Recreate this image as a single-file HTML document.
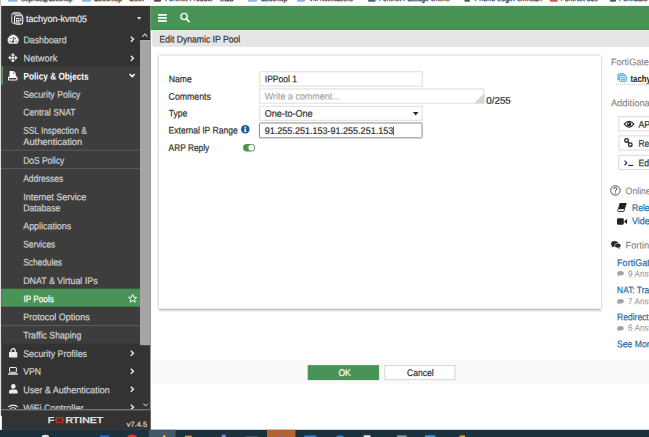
<!DOCTYPE html><html lang="en"><head><meta charset="utf-8"><title>Edit Dynamic IP Pool</title><style>
html,body{margin:0;padding:0}
body{width:649px;height:437px;overflow:hidden;position:relative;background:#fff;font-family:"Liberation Sans",sans-serif;font-size:9.33px;color:#333}
.a{position:absolute}
.t{position:absolute;left:0;top:0;white-space:pre;line-height:0;transform-origin:0 0;display:block;-webkit-text-stroke:.22px}
svg{position:absolute;overflow:visible}
#wrap{left:0;top:0;width:649px;height:437px;overflow:hidden}
#bg{left:0;top:0}
#bm{left:0;top:0;width:649px;height:5.9px;overflow:hidden}
h1{margin:0;font:inherit}
#card{left:0;top:0;width:442px;height:253.4px;background:#fff;box-shadow:0 .5px 2.6px .3px rgba(0,0,0,.36);transform:translate(159px,55.75px)}
</style></head><body>
<div id="wrap" class="a">
<svg id="bg" width="649" height="437" viewBox="0 0 649 437"><rect x="8" y="-4" width="9.60" height="5.70" fill="#7aa7e6" rx="1" opacity=".85"/><rect x="82" y="-4" width="9.00" height="5.70" fill="#7aa7e6" rx="1" opacity=".85"/><rect x="154" y="-4" width="7.00" height="5.70" fill="#333" rx="1" opacity=".85"/><rect x="248" y="-4" width="9.00" height="5.70" fill="#7aa7e6" rx="1" opacity=".85"/><rect x="297" y="-4" width="8.00" height="5.70" fill="#7a9fe0" rx="1" opacity=".85"/><rect x="368" y="-4" width="7.60" height="5.70" fill="#1d5560" rx="1" opacity=".85"/><rect x="464.4" y="-4" width="5.60" height="5.70" fill="#1e4d2b" rx="1" opacity=".85"/><rect x="549.8" y="-4" width="7.90" height="5.70" fill="#d8362b" rx="1" opacity=".85"/><rect x="610" y="-4" width="6.00" height="5.70" fill="#1e4d2b" rx="1" opacity=".85"/><rect x="0" y="0" width="1.00" height="5.90" fill="#c2c2c2"/><rect x="0" y="5.9" width="1.20" height="410.10" fill="#dedede"/><rect x="1.15" y="5.9" width="149.35" height="423.90" fill="#333"/><rect x="1.15" y="66.1" width="138.85" height="277.60" fill="#3d3d3d"/><rect x="1.15" y="288.7" width="138.85" height="18.00" fill="#4a9356"/><rect x="1.15" y="66.1" width="1.95" height="18.50" fill="#4a9356"/><rect x="1.15" y="149.6" width="138.85" height="1.00" fill="#5e5e5e"/><rect x="1.15" y="168.2" width="138.85" height="1.00" fill="#5e5e5e"/><rect x="1.15" y="325.1" width="138.85" height="1.00" fill="#5e5e5e"/><rect x="140" y="39.4" width="10.10" height="0.70" fill="#222"/><rect x="140" y="40.1" width="10.10" height="305.10" fill="#a5a5a5"/><rect x="140" y="40.1" width="10.10" height="0.80" fill="#b9b9b9"/><rect x="1.15" y="409.3" width="149.35" height="1.00" fill="#8c8c8c"/><rect x="150.5" y="5.9" width="498.50" height="24.10" fill="#4a9356"/><rect x="150.5" y="29.2" width="498.50" height="0.80" fill="#3c874a"/><rect x="152.1" y="30" width="496.90" height="16.80" fill="#e5e5e5"/><rect x="152.1" y="30" width="496.90" height="0.90" fill="#f1f1f1"/><rect x="152.1" y="360.1" width="496.90" height="24.60" fill="#fafafa"/><rect x="307.7" y="365.1" width="71.40" height="15.00" fill="#4a9356"/><rect x="384.80" y="365.60" width="70.30" height="14.00" fill="#fff" stroke="#d6d6d6" stroke-width="1"/><rect x="0" y="429.8" width="649.00" height="7.70" fill="#1b313d"/><rect x="41.6" y="434.7" width="7.60" height="5.30" fill="#e8e8e8" rx="4"/><rect x="100" y="435.4" width="9.20" height="4.60" fill="#1e74c8"/><rect x="127.2" y="434.5" width="9.80" height="5.50" fill="#d9372a" rx="5"/><rect x="148.8" y="429.8" width="26.80" height="10.20" fill="#42596a"/><path d="M164.4 434.7 L168.2 440 L160.6 440 Z" fill="#f4d21f"/><rect x="185" y="435.7" width="6.70" height="4.30" fill="#d9a521"/><rect x="221.7" y="434.6" width="4.10" height="5.40" fill="#7b7be0" rx="1"/><rect x="245.5" y="436.2" width="12.50" height="3.80" fill="#4c5a66"/><rect x="267" y="429.8" width="28.50" height="10.20" fill="#b4652f"/><rect x="278.9" y="435.4" width="5.00" height="4.60" fill="#6a6ad8" rx="2"/><rect x="304.4" y="435.5" width="12.00" height="4.50" fill="#2b84d8"/><rect x="335.8" y="435.6" width="8.40" height="4.40" fill="#2b84d8" rx="4"/><rect x="363.6" y="435.2" width="6.90" height="4.80" fill="#d8d8d8"/><rect x="397" y="435.3" width="9.70" height="4.70" fill="#8a949c"/><rect x="425" y="435.2" width="10.40" height="4.80" fill="#3b8fe0"/><rect x="459.6" y="435.4" width="5.40" height="4.60" fill="#e0a030"/></svg>
<div id="bm" class="a"><span class="t" style="font-size:8px;color:#2a2a2a;transform:matrix(0.7873,.0005,0,1,21.00,-0.85);">Sophos@asoc.top</span><span class="t" style="font-size:8px;color:#2a2a2a;transform:matrix(0.9344,.0005,0,1,94.00,-0.85);">asoc.top - User</span><span class="t" style="font-size:8px;color:#2a2a2a;transform:matrix(0.8320,.0005,0,1,165.00,-0.85);">Fortinet Product</span><span class="t" style="font-size:8px;color:#2a2a2a;transform:matrix(1.0073,.0005,0,1,220.00,-0.85);">Lab</span><span class="t" style="font-size:8px;color:#2a2a2a;transform:matrix(0.8768,.0005,0,1,261.00,-0.85);">asoc.top</span><span class="t" style="font-size:8px;color:#2a2a2a;transform:matrix(0.7613,.0005,0,1,309.00,-0.85);">VM Notifications</span><span class="t" style="font-size:8px;color:#2a2a2a;transform:matrix(0.8220,.0005,0,1,379.00,-0.85);">Fortinet Passage Online</span><span class="t" style="font-size:8px;color:#2a2a2a;transform:matrix(0.8915,.0005,0,1,474.60,-0.85);">Phone Login Ormsan</span><span class="t" style="font-size:8px;color:#2a2a2a;transform:matrix(0.8503,.0005,0,1,560.60,-0.85);">FortiNet 360</span><span class="t" style="font-size:8px;color:#2a2a2a;transform:matrix(0.8559,.0005,0,1,619.00,-0.85);">FortiGate VM</span></div>
<header><svg style="left:157.9px;top:14.2px" width="8.8" height="8" viewBox="0 0 8.8 8"><rect x="0" y="0" width="8.8" height="1.75" fill="#fff"/><rect x="0" y="3.05" width="8.8" height="1.75" fill="#fff"/><rect x="0" y="6.1" width="8.8" height="1.75" fill="#fff"/></svg><svg style="left:180.4px;top:12.2px" width="10" height="11" viewBox="0 0 10 11"><circle cx="4.1" cy="4.5" r="3.1" fill="none" stroke="#fff" stroke-width="1.4"/><path d="M6.4 6.9 L9.1 9.7" stroke="#fff" stroke-width="1.7" stroke-linecap="round"/></svg></header>
<nav>
<a class="t" style="font-size:9.6px;color:#e6e6e6;transform:matrix(0.9395,.0005,0,1,25.90,19.10);">tachyon-kvm05</a>
<a class="t" style="font-size:9.6px;color:#d0d0d0;transform:matrix(0.9206,.0005,0,1,23.40,40.20);">Dashboard</a>
<a class="t" style="font-size:9.6px;color:#d0d0d0;transform:matrix(0.9608,.0005,0,1,23.50,58.46);">Network</a>
<a class="t" style="font-size:9.6px;color:#fff;transform:matrix(0.8610,.0005,0,1,23.50,76.60);font-weight:700;-webkit-text-stroke:0;">Policy &amp; Objects</a>
<a class="t" style="font-size:9.6px;color:#d0d0d0;transform:matrix(0.9094,.0005,0,1,23.20,94.75);">Security Policy</a>
<a class="t" style="font-size:9.6px;color:#d0d0d0;transform:matrix(0.8941,.0005,0,1,23.20,112.55);">Central SNAT</a>
<a class="t" style="font-size:9.6px;color:#d0d0d0;transform:matrix(0.8666,.0005,0,1,23.20,130.80);">SSL Inspection &amp;</a>
<a class="t" style="font-size:9.6px;color:#d0d0d0;transform:matrix(0.9691,.0005,0,1,23.20,142.00);">Authentication</a>
<a class="t" style="font-size:9.6px;color:#d0d0d0;transform:matrix(0.8764,.0005,0,1,23.20,160.80);">DoS Policy</a>
<a class="t" style="font-size:9.6px;color:#d0d0d0;transform:matrix(0.8829,.0005,0,1,23.20,178.70);">Addresses</a>
<a class="t" style="font-size:9.6px;color:#d0d0d0;transform:matrix(0.9394,.0005,0,1,23.20,197.20);">Internet Service</a>
<a class="t" style="font-size:9.6px;color:#d0d0d0;transform:matrix(0.9034,.0005,0,1,23.20,208.30);">Database</a>
<a class="t" style="font-size:9.6px;color:#d0d0d0;transform:matrix(0.9281,.0005,0,1,23.20,226.20);">Applications</a>
<a class="t" style="font-size:9.6px;color:#d0d0d0;transform:matrix(0.8705,.0005,0,1,23.20,244.46);">Services</a>
<a class="t" style="font-size:9.6px;color:#d0d0d0;transform:matrix(0.8666,.0005,0,1,23.20,262.60);">Schedules</a>
<a class="t" style="font-size:9.6px;color:#d0d0d0;transform:matrix(0.9236,.0005,0,1,23.20,280.90);">DNAT &amp; Virtual IPs</a>
<a class="t" style="font-size:9.6px;color:#fff;transform:matrix(0.8516,.0005,0,1,23.50,299.30);">IP Pools</a>
<a class="t" style="font-size:9.6px;color:#d0d0d0;transform:matrix(0.9378,.0005,0,1,23.20,317.20);">Protocol Options</a>
<a class="t" style="font-size:9.6px;color:#d0d0d0;transform:matrix(0.9080,.0005,0,1,23.20,335.40);">Traffic Shaping</a>
<a class="t" style="font-size:9.6px;color:#d0d0d0;transform:matrix(0.9207,.0005,0,1,23.20,353.90);">Security Profiles</a>
<a class="t" style="font-size:9.6px;color:#d0d0d0;transform:matrix(0.8991,.0005,0,1,23.20,371.80);">VPN</a>
<a class="t" style="font-size:9.6px;color:#d0d0d0;transform:matrix(0.9388,.0005,0,1,23.20,390.20);">User &amp; Authentication</a>
<a class="t" style="font-size:9.6px;color:#d0d0d0;transform:matrix(0.9512,.0005,0,1,23.20,408.30);">WiFi Controller</a>
<svg style="left:10.6px;top:11.8px" width="13" height="13" viewBox="0 0 13 13"><path d="M1.2 2.4 Q1.4 0.9 3 0.8 L8.8 0.8 L11.6 3.6 L4.2 3.6 Z" fill="#9c9c9c"/><path d="M0.8 10.6 L0.8 2.8 Q0.8 0.7 2.9 0.7 L8.7 0.7 L11.7 3.7" fill="none" stroke="#d2d2d2" stroke-width="1"/><path d="M0.8 10.4 L3.4 12" stroke="#d2d2d2" stroke-width="1"/><rect x="3.5" y="3.8" width="8.3" height="8.3" rx="1.8" fill="#333" stroke="#f6f6f6" stroke-width="1.1"/><rect x="4.9" y="5.8" width="3.2" height="1.1" fill="#f6f6f6"/><rect x="8.6" y="5.8" width="1.9" height="1.1" fill="#f6f6f6"/><rect x="4.9" y="7.6" width="1.6" height="2.2" fill="#f6f6f6"/><rect x="7.1" y="7.6" width="1.4" height="2.2" fill="#f6f6f6"/><rect x="9" y="7.6" width="1.5" height="1.6" fill="#f6f6f6"/><rect x="4.9" y="10.4" width="4" height="0.9" fill="#f6f6f6"/></svg>
<svg style="left:136.9px;top:16.9px" width="4.3" height="2.9" viewBox="0 0 4.3 2.9"><path d="M0 0 L4.3 0 L2.15 2.8 Z" fill="#dadada"/></svg>
<svg style="left:7.9px;top:34.75px" width="10.3" height="8.6" viewBox="0 0 10.3 8.6"><path d="M1.1 8.4 A5.15 5.15 0 1 1 9.2 8.4 Z" fill="#ececec" stroke="#ececec" stroke-width=".5" stroke-linejoin="round"/><g fill="#333"><circle cx="2.2" cy="6.3" r=".62"/><circle cx="8.1" cy="6.3" r=".62"/><circle cx="3" cy="3.5" r=".62"/><circle cx="7.4" cy="3.5" r=".55"/><circle cx="5.15" cy="2.3" r=".6"/><circle cx="4.8" cy="6.8" r="1"/></g><path d="M4.85 6.8 L6.1 3.2" stroke="#333" stroke-width=".95" stroke-linecap="round"/></svg>
<svg style="left:8.05px;top:52.85px" width="9.8" height="9.6" viewBox="0 0 10 10"><path d="M5 0 L7.3 2.6 L5.65 2.6 L5.65 4.35 L7.4 4.35 L7.4 2.7 L10 5 L7.4 7.3 L7.4 5.65 L5.65 5.65 L5.65 7.4 L7.3 7.4 L5 10 L2.7 7.4 L4.35 7.4 L4.35 5.65 L2.6 5.65 L2.6 7.3 L0 5 L2.6 2.7 L2.6 4.35 L4.35 4.35 L4.35 2.6 L2.7 2.6 Z" fill="#ececec"/></svg>
<svg style="left:8.1px;top:70.9px" width="9.6" height="9.7" viewBox="0 0 9.6 9.7"><rect x="0" y="5.4" width="9.5" height="4.2" rx="1.3" fill="#fff"/><rect x="0.9" y="6.9" width="7.7" height="1.6" rx=".5" fill="#3d3d3d"/><path d="M1.5 0 L5.6 0 L7.8 2.1 L7.8 6.5 L1.5 6.5 Z" fill="#fff"/><path d="M5.3 0.3 L5.3 2.4 L7.5 2.4" fill="none" stroke="#3d3d3d" stroke-width=".5"/></svg>
<svg style="left:8.9px;top:348.4px" width="8.3" height="9.4" viewBox="0 0 8.3 9.4"><path d="M2.1 4.2 L2.1 2.8 A2.05 2.05 0 0 1 6.2 2.8 L6.2 4.2" fill="none" stroke="#ececec" stroke-width="1.3"/><rect x="0" y="4" width="8.3" height="5.4" rx="0.8" fill="#ececec"/></svg>
<svg style="left:8px;top:366.9px" width="10" height="8" viewBox="0 0 10 8"><rect x="1.6" y="0.5" width="6.8" height="4.8" rx="0.5" fill="none" stroke="#ededed" stroke-width="1"/><rect x="0" y="6.3" width="10" height="1.4" rx="0.6" fill="#ededed"/></svg>
<svg style="left:8.7px;top:384.3px" width="8.6" height="9.4" viewBox="0 0 8.6 9.4"><circle cx="4.3" cy="2.4" r="2.3" fill="#ededed"/><path d="M0 9.4 L0 7.6 Q0 5.4 2.6 5.4 L6 5.4 Q8.6 5.4 8.6 7.6 L8.6 9.4 Z" fill="#ededed"/></svg>
<svg style="left:8px;top:403.6px" width="10" height="8" viewBox="0 0 10 8"><path d="M0.4 3 A6.5 6.5 0 0 1 9.6 3" fill="none" stroke="#ededed" stroke-width="1.1"/><path d="M2.2 4.9 A4 4 0 0 1 7.8 4.9" fill="none" stroke="#ededed" stroke-width="1.1"/><circle cx="5" cy="7" r="0.9" fill="#ededed"/></svg>
<svg style="left:127.5px;top:294.05px" width="9.6" height="9" viewBox="0 0 9.6 9"><path d="M4.70 0.50 L5.85 3.17 L8.74 3.44 L6.55 5.35 L7.20 8.19 L4.70 6.70 L2.20 8.19 L2.85 5.35 L0.66 3.44 L3.55 3.17 Z" fill="none" stroke="#fff" stroke-width="0.95" stroke-linejoin="round"/></svg>
<svg style="left:142.4px;top:32.8px" width="5.8" height="4.2" viewBox="0 0 5.8 4.2"><path d="M0.5 3.7 L2.9 1 L5.3 3.7" fill="none" stroke="#dcdcdc" stroke-width="1.05"/></svg>
<svg style="left:142.6px;top:402.8px" width="5.4" height="4" viewBox="0 0 5.4 4"><path d="M0.5 0.5 L2.7 3.1 L4.9 0.5" fill="none" stroke="#d8d8d8" stroke-width="1"/></svg>
<svg style="left:128.7px;top:73.4px" width="6.4" height="4.8" viewBox="0 0 6.4 4.8"><path d="M0.7 0.9 L3.2 3.6 L5.7 0.9" fill="none" stroke="#fff" stroke-width="1.5"/></svg>
<svg class="a" style="left:130px;top:36.4px" width="4.4" height="6.4" viewBox="0 0 4.4 6.4"><path d="M0.8 0.7 L3.4 3.2 L0.8 5.7" fill="none" stroke="#e8e8e8" stroke-width="1.5"/></svg>
<svg class="a" style="left:130px;top:54.7px" width="4.4" height="6.4" viewBox="0 0 4.4 6.4"><path d="M0.8 0.7 L3.4 3.2 L0.8 5.7" fill="none" stroke="#e8e8e8" stroke-width="1.5"/></svg>
<svg class="a" style="left:130px;top:349.7px" width="4.4" height="6.4" viewBox="0 0 4.4 6.4"><path d="M0.8 0.7 L3.4 3.2 L0.8 5.7" fill="none" stroke="#e8e8e8" stroke-width="1.5"/></svg>
<svg class="a" style="left:130px;top:367.7px" width="4.4" height="6.4" viewBox="0 0 4.4 6.4"><path d="M0.8 0.7 L3.4 3.2 L0.8 5.7" fill="none" stroke="#e8e8e8" stroke-width="1.5"/></svg>
<svg class="a" style="left:130px;top:386.1px" width="4.4" height="6.4" viewBox="0 0 4.4 6.4"><path d="M0.8 0.7 L3.4 3.2 L0.8 5.7" fill="none" stroke="#e8e8e8" stroke-width="1.5"/></svg>
<svg class="a" style="left:130px;top:404.0px" width="4.4" height="6.4" viewBox="0 0 4.4 6.4"><path d="M0.8 0.7 L3.4 3.2 L0.8 5.7" fill="none" stroke="#e8e8e8" stroke-width="1.5"/></svg>
<svg width="649" height="437" viewBox="0 0 649 437" style="left:0;top:0"><rect x="1.15" y="409.3" width="149.35" height="20.5" fill="#333"/><rect x="1.15" y="409.3" width="149.35" height="1" fill="#8c8c8c"/><rect x="0" y="415.8" width="1.9" height="14" fill="#fff"/></svg>
<div class="a" id="logo" style="left:0;top:0"><span class="t" style="font-size:8.4px;color:#e6e6e6;transform:matrix(1.2400,.0005,0,1,47.70,419.95);-webkit-text-stroke:.38px;">F</span><svg style="left:55.1px;top:416.8px" width="9.2" height="6.2" viewBox="0 0 9.2 6.2"><g fill="#e0281c"><rect x="0.9" y="0" width="1.9" height="1.7"/><rect x="3.6" y="0" width="2" height="1.7"/><rect x="6.4" y="0" width="1.9" height="1.7"/><rect x="0" y="2.2" width="2.4" height="1.8"/><rect x="6.8" y="2.2" width="2.4" height="1.8"/><rect x="0.9" y="4.5" width="1.9" height="1.7"/><rect x="3.6" y="4.5" width="2" height="1.7"/><rect x="6.4" y="4.5" width="1.9" height="1.7"/></g></svg><span class="t" style="font-size:8.4px;color:#e6e6e6;transform:matrix(1.2544,.0005,0,1,65.40,419.95);-webkit-text-stroke:.38px;">RTINET</span></div>
<span class="t" style="font-size:7.3px;color:#d4d4d4;transform:matrix(1.0242,.0005,0,1,126.70,424.75);">v7.4.5</span>
</nav>
<main>
<h1><span class="t" style="font-size:9.6px;color:#333;transform:matrix(0.8958,.0005,0,1,159.60,39.45);">Edit Dynamic IP Pool</span></h1>
<div id="card" class="a"></div>
<form>
<svg id="ctl" width="649" height="437" viewBox="0 0 649 437" style="left:0;top:0"><defs><filter id="bl" x="-10%" y="-50%" width="120%" height="200%"><feGaussianBlur stdDeviation="0.9"/></filter></defs><rect x="259.80" y="71.80" width="162.40" height="14.30" fill="#fff" stroke="#dcdcdc" stroke-width="1"/><rect x="259.80" y="88.90" width="224.10" height="14.30" fill="#fff" stroke="#dcdcdc" stroke-width="1"/><rect x="259.80" y="106.30" width="162.40" height="14.00" fill="#fff" stroke="#dcdcdc" stroke-width="1"/><rect x="259.5" y="123.3" width="162.5" height="14.8" fill="#000" opacity=".17" filter="url(#bl)"/><rect x="259.50" y="123.00" width="162.50" height="14.80" fill="#fff" stroke="#929292" stroke-width="1" rx=".5"/><rect x="393.2" y="126.2" width="0.70" height="9.00" fill="#222"/><rect x="618.80" y="116.70" width="60.70" height="14.20" fill="#fff" stroke="#dadada" stroke-width="1"/><rect x="618.80" y="135.90" width="60.70" height="14.20" fill="#fff" stroke="#dadada" stroke-width="1"/><rect x="618.80" y="155.30" width="60.70" height="14.20" fill="#fff" stroke="#dadada" stroke-width="1"/></svg>
<label class="t" style="font-size:9.6px;color:#333;transform:matrix(0.9028,.0005,0,1,168.70,79.35);">Name</label>
<label class="t" style="font-size:9.6px;color:#333;transform:matrix(0.9123,.0005,0,1,168.60,96.85);">Comments</label>
<label class="t" style="font-size:9.6px;color:#333;transform:matrix(0.8894,.0005,0,1,168.70,113.55);">Type</label>
<label class="t" style="font-size:9.6px;color:#333;transform:matrix(0.8887,.0005,0,1,168.60,130.55);">External IP Range</label>
<label class="t" style="font-size:9.6px;color:#333;transform:matrix(0.8701,.0005,0,1,168.60,147.95);">ARP Reply</label>
<span class="t" style="font-size:9.6px;color:#333;transform:matrix(0.8878,.0005,0,1,264.80,79.35);">IPPool 1</span><span class="t" style="font-size:9.6px;color:#9a9a9a;transform:matrix(0.9315,.0005,0,1,264.80,96.55);-webkit-text-stroke:.08px;">Write a comment...</span><svg style="left:474.8px;top:94px" width="9" height="9" viewBox="0 0 9 9"><path d="M0.5 9 L9 0.5 M2.6 9 L9 2.6 M4.7 9 L9 4.7 M6.8 9 L9 6.8" stroke="#8a8a8a" stroke-width="0.7"/></svg><span class="t" style="font-size:9.6px;color:#333;transform:matrix(1.0181,.0005,0,1,486.30,100.85);">0/255</span><span class="t" style="font-size:9.6px;color:#333;transform:matrix(0.9419,.0005,0,1,264.80,113.85);">One-to-One</span><svg style="left:413.1px;top:111.8px" width="5.4" height="3.4" viewBox="0 0 5.4 3.4"><path d="M0 0 L5.4 0 L2.7 3.4 Z" fill="#222"/></svg><span class="t" style="font-size:9.6px;color:#333;transform:matrix(0.9403,.0005,0,1,264.80,131.05);">91.255.251.153-91.255.251.153</span>
<svg style="left:240.5px;top:125.4px" width="8.6" height="8.6" viewBox="0 0 8.6 8.6"><circle cx="4.3" cy="4.2" r="4.25" fill="#165e9a"/><rect x="3.6" y="3.6" width="1.5" height="3.2" fill="#fff"/><rect x="3.1" y="3.6" width="1.2" height="0.8" fill="#fff"/><rect x="3.1" y="6.1" width="2.5" height="0.8" fill="#fff"/><circle cx="4.3" cy="2.1" r="0.85" fill="#fff"/></svg><svg style="left:242.6px;top:143.5px" width="12" height="7.4" viewBox="0 0 12 7.4"><rect x="0" y="0" width="12" height="7.4" rx="3.7" fill="#4a9356"/><circle cx="8.3" cy="3.7" r="2.9" fill="#fff"/></svg>
</form>
<footer><span class="t" style="font-size:9.6px;color:#fff;transform:matrix(0.8851,.0005,0,1,338.50,372.95);">OK</span><span class="t" style="font-size:9.6px;color:#333;transform:matrix(0.8913,.0005,0,1,407.00,372.95);">Cancel</span></footer>
</main>
<aside>
<span class="t" style="font-size:9.6px;color:#7e7e7e;transform:matrix(0.9508,.0005,0,1,610.90,62.25);-webkit-text-stroke:.08px;">FortiGate</span>
<span class="t" style="font-size:9.6px;color:#222;transform:matrix(0.8060,.0005,0,1,630.50,79.05);font-weight:700;-webkit-text-stroke:0;">tachyon-kvm05</span>
<span class="t" style="font-size:9.6px;color:#7e7e7e;transform:matrix(0.9724,.0005,0,1,610.90,103.15);-webkit-text-stroke:.08px;">Additional Information</span>
<span class="t" style="font-size:9.6px;color:#333;transform:matrix(0.9064,.0005,0,1,638.50,124.65);">API Preview</span>
<span class="t" style="font-size:9.6px;color:#333;transform:matrix(0.8643,.0005,0,1,638.50,143.85);">References</span>
<span class="t" style="font-size:9.6px;color:#333;transform:matrix(0.9033,.0005,0,1,638.50,163.15);">Edit in CLI</span>
<span class="t" style="font-size:9.6px;color:#7e7e7e;transform:matrix(0.9087,.0005,0,1,625.60,191.25);-webkit-text-stroke:.08px;">Online Guides</span>
<a class="t" style="font-size:9.6px;color:#2b6ca3;transform:matrix(0.8869,.0005,0,1,632.00,208.05);">Relevant Documentation</a>
<a class="t" style="font-size:9.6px;color:#2b6ca3;transform:matrix(0.9249,.0005,0,1,632.00,221.15);">Video Tutorials</a>
<span class="t" style="font-size:9.6px;color:#7e7e7e;transform:matrix(0.9624,.0005,0,1,625.60,245.55);-webkit-text-stroke:.08px;">Fortinet Community</span>
<a class="t" style="font-size:9.6px;color:#2b6ca3;transform:matrix(0.9408,.0005,0,1,617.10,262.95);">FortiGate IP Pool not working</a>
<span class="t" style="font-size:8.8px;color:#9a9a9a;transform:matrix(0.9336,.0005,0,1,628.10,273.85);-webkit-text-stroke:.08px;">9 Answers</span>
<a class="t" style="font-size:9.6px;color:#2b6ca3;transform:matrix(0.8756,.0005,0,1,617.10,290.15);">NAT: Traffic not using IP Pool</a>
<span class="t" style="font-size:8.8px;color:#9a9a9a;transform:matrix(0.9336,.0005,0,1,628.10,301.15);-webkit-text-stroke:.08px;">7 Answers</span>
<a class="t" style="font-size:9.6px;color:#2b6ca3;transform:matrix(0.8846,.0005,0,1,617.10,317.15);">Redirect traffic to IP Pool</a>
<span class="t" style="font-size:8.8px;color:#9a9a9a;transform:matrix(0.9336,.0005,0,1,628.10,327.85);-webkit-text-stroke:.08px;">6 Answers</span>
<a class="t" style="font-size:9.6px;color:#2b6ca3;transform:matrix(0.8936,.0005,0,1,617.10,344.35);">See More</a>
<svg width="40" height="2" style="left:616px;top:83.6px"><path d="M0 0.6 H40" stroke="#c2c2c2" stroke-width="0.9" stroke-dasharray="1 1"/></svg>
<svg style="left:616.9px;top:73.2px" width="10" height="9.2" viewBox="0 0 10 9.2"><path d="M0.9 7.2 L0.9 2.2 Q0.9 0.6 2.5 0.6 L6.6 0.6 L9 2.9 L3 2.9 Z" fill="#9fd0f7" stroke="#55a8ee" stroke-width=".9" stroke-linejoin="round"/><rect x="2.7" y="2.7" width="6.7" height="6" rx="1.2" fill="#e9f4fe" stroke="#55a8ee" stroke-width="1"/><rect x="3.9" y="4.3" width="4.3" height="0.9" fill="#4a9fe8"/><rect x="3.9" y="5.9" width="1.3" height="1.6" fill="#4a9fe8"/><rect x="5.9" y="5.9" width="2.2" height="1.6" fill="#4a9fe8"/></svg>
<svg style="left:623.7px;top:121.2px" width="10.2" height="6.4" viewBox="0 0 10.2 6.4"><path d="M0.3 3.2 Q5.1 -2.6 9.9 3.2 Q5.1 9 0.3 3.2 Z" fill="none" stroke="#222" stroke-width="1.15"/><circle cx="5.1" cy="3.1" r="2.2" fill="#222"/><circle cx="4.4" cy="2.4" r="0.7" fill="#fff"/></svg>
<svg style="left:624.1px;top:137.9px" width="8.8" height="9.2" viewBox="0 0 8.8 9.2"><circle cx="2.5" cy="2.5" r="1.8" fill="none" stroke="#222" stroke-width="1.35"/><circle cx="6.3" cy="6.7" r="1.8" fill="none" stroke="#222" stroke-width="1.35"/><path d="M3.6 3.8 L5.2 5.4" stroke="#222" stroke-width="1.35"/></svg>
<svg style="left:623.9px;top:160.1px" width="9.4" height="6.2" viewBox="0 0 9.4 6.2"><path d="M0.5 0.6 L2.9 2.9 L0.5 5.2" fill="none" stroke="#222" stroke-width="1.1"/><rect x="4.2" y="4.9" width="5" height="1.1" fill="#222"/></svg>
<svg style="left:610.4px;top:184.5px" width="10.8" height="11" viewBox="0 0 10.8 11"><circle cx="5.4" cy="5.5" r="4.7" fill="none" stroke="#3a3a3a" stroke-width="0.9"/><path d="M3.8 4.3 Q3.8 2.7 5.4 2.7 Q7 2.7 7 4.1 Q7 5 5.4 5.7 L5.4 6.7" fill="none" stroke="#3a3a3a" stroke-width="0.95"/><circle cx="5.4" cy="8.1" r="0.6" fill="#3a3a3a"/></svg>
<svg style="left:617.4px;top:203.3px" width="9.6" height="8.8" viewBox="0 0 9.6 8.8"><path d="M2.7 0 L9.4 0 Q9.7 0 9.6 .4 L7.8 6.3 L0.9 6.3 Z" fill="#222"/><path d="M1 6.3 Q-0.1 7.5 1 8.4 L7 8.4 L7.7 6.3" fill="none" stroke="#222" stroke-width="0.9"/></svg>
<svg style="left:617px;top:217.5px" width="10.2" height="7" viewBox="0 0 10.2 7"><rect x="0" y="0.3" width="6.8" height="6.4" rx="1.1" fill="#222"/><path d="M7 3.5 L10.1 0.7 L10.1 6.3 Z" fill="#222"/></svg>
<svg style="left:610.8px;top:241.1px" width="10" height="7.8" viewBox="0 0 10 7.8"><ellipse cx="3.6" cy="2.8" rx="3.6" ry="2.8" fill="#2b2b2b"/><path d="M1.2 4.4 L0.6 6.4 L3 5.2 Z" fill="#2b2b2b"/><ellipse cx="6.8" cy="4.6" rx="3.1" ry="2.4" fill="#2b2b2b" stroke="#fff" stroke-width="0.5"/><path d="M8.2 6.2 L9.4 7.8 L6.8 6.9 Z" fill="#2b2b2b"/></svg>
<svg style="left:617px;top:271.2px" width="6.8" height="5.4" viewBox="0 0 6.8 5.4"><ellipse cx="3.5" cy="2.2" rx="3.3" ry="2.2" fill="#a2a2a2"/><path d="M1.2 3.4 L0.4 5.3 L3 4.2 Z" fill="#a2a2a2"/></svg>
<svg style="left:617px;top:298.7px" width="6.8" height="5.4" viewBox="0 0 6.8 5.4"><ellipse cx="3.5" cy="2.2" rx="3.3" ry="2.2" fill="#a2a2a2"/><path d="M1.2 3.4 L0.4 5.3 L3 4.2 Z" fill="#a2a2a2"/></svg>
<svg style="left:617px;top:325.6px" width="6.8" height="5.4" viewBox="0 0 6.8 5.4"><ellipse cx="3.5" cy="2.2" rx="3.3" ry="2.2" fill="#a2a2a2"/><path d="M1.2 3.4 L0.4 5.3 L3 4.2 Z" fill="#a2a2a2"/></svg>
</aside>
</div></body></html>
